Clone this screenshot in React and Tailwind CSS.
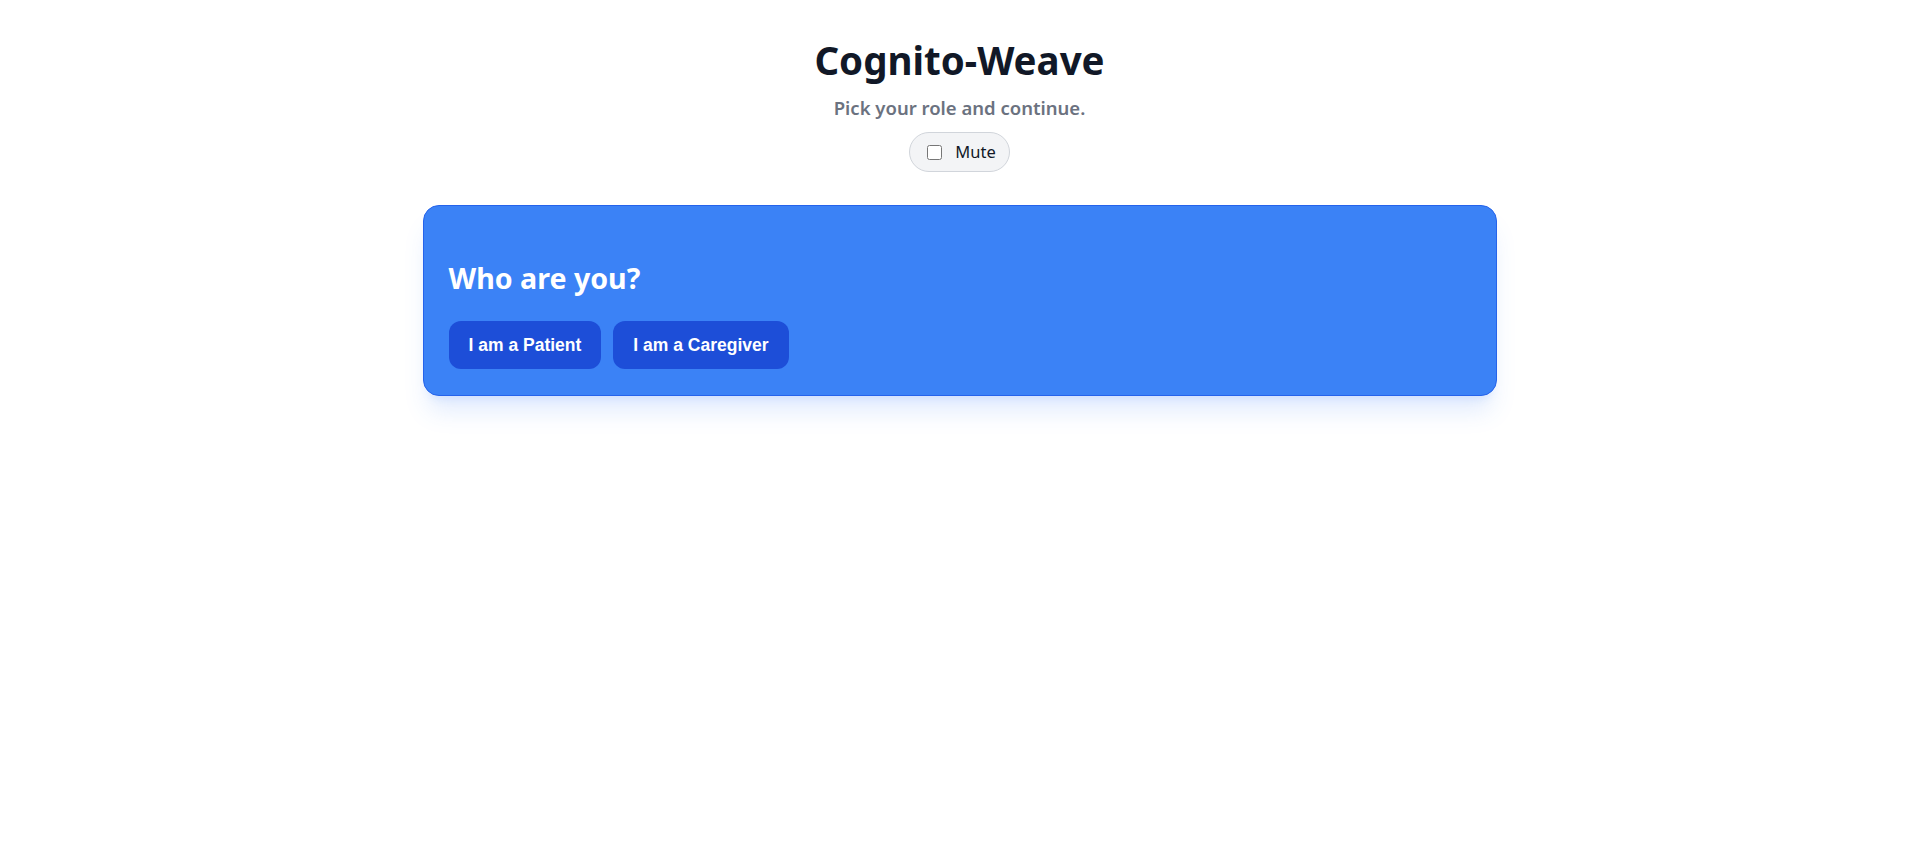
export default function App() {
  return (
    <div className="min-h-screen bg-white font-['Noto_Sans',sans-serif]">
      <div className="flex flex-col items-center pt-[34px]">
        <h1 className="text-[38.5px] font-bold leading-[52px] text-[#111827]">Cognito-Weave</h1>
        <p className="mt-[9px] text-[18.5px] font-semibold leading-[26px] text-[#6b7280]">
          Pick your role and continue.
        </p>
        <label className="mt-[11px] flex h-[40px] items-center gap-[13px] rounded-full border border-[#d1d5db] bg-[#f3f4f6] pl-[17px] pr-[13px] text-[16.5px] text-[#111827]">
          <input type="checkbox" className="h-[15px] w-[15px]" />
          <span>Mute</span>
        </label>

        <div className="mt-[33px] w-[1074px] rounded-2xl border border-[#2563eb] bg-[#3b82f6] px-[25px] pb-[26px] pt-[52px] shadow-xl shadow-[#3b82f6]/15">
          <h2 className="text-[28.6px] font-bold leading-[40px] text-white">Who are you?</h2>
          <div className="mt-[23px] flex gap-[12px]">
            <button className="rounded-xl bg-[#1d4ed8] px-[20px] py-[12px] font-['Liberation_Sans',Arial,sans-serif] text-[17.5px] font-bold leading-[24px] text-white">
              I am a Patient
            </button>
            <button className="rounded-xl bg-[#1d4ed8] px-[20px] py-[12px] font-['Liberation_Sans',Arial,sans-serif] text-[17.5px] font-bold leading-[24px] text-white">
              I am a Caregiver
            </button>
          </div>
        </div>
      </div>
    </div>
  );
}
